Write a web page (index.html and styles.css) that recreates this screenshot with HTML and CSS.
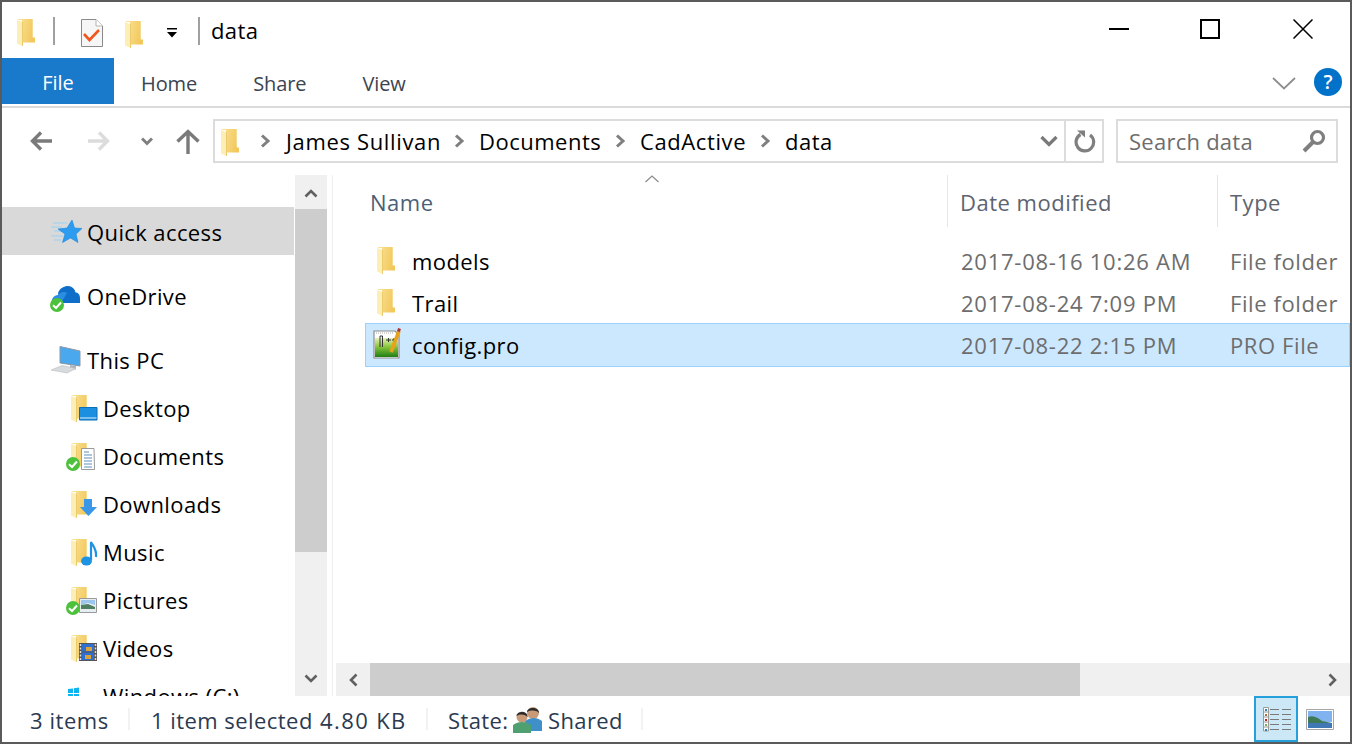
FILE: index.html
```html
<!DOCTYPE html>
<html lang="en">
<head>
<meta charset="utf-8">
<title>data</title>
<link rel="stylesheet" href="styles.css">
</head>
<body>
<svg class="defs" width="0" height="0" aria-hidden="true">
  <defs>
    <linearGradient id="fg" x1="0" y1="0" x2="1" y2="0.25"><stop offset="0" stop-color="#fbe49a"/><stop offset="1" stop-color="#f2c85c"/></linearGradient>
    <linearGradient id="pg" x1="0" y1="0" x2="0" y2="1"><stop offset="0" stop-color="#e4f2b8"/><stop offset=".45" stop-color="#8cc63e"/><stop offset="1" stop-color="#1f7f14"/></linearGradient>
    <symbol id="folder" viewBox="0 0 18 27">
      <path d="M0 1L2 0H15.7V18.5H18V23.5H5V1Z" fill="url(#fg)"/>
      <path d="M0 1L5.5 3V27L0 24.5Z" fill="#fdeeb5"/>
      <path d="M5.5 3V27" stroke="#eccb6e" stroke-width="1"/>
    </symbol>
    <symbol id="check" viewBox="0 0 14 14">
      <circle cx="7" cy="7" r="7" fill="#4cc13c"/>
      <path d="M3 7.200L6 10L11 4.500" fill="none" stroke="#fff" stroke-width="2"/>
    </symbol>
    <symbol id="crumb" viewBox="0 0 11 14">
      <path d="M2 1.500L8 7L2 12.500" fill="none" stroke="#7f7f7f" stroke-width="3"/>
    </symbol>
  </defs>
</svg>
<div class="window">
  <header class="titlebar">
    <svg class="folder-q" width="18" height="27"><use href="#folder"/></svg>
    <span class="qsep qsep-a"></span>
    <svg class="doc-q" width="22" height="28" viewBox="0 0 22 28">
      <path d="M.5.5H15L21.500 7V27.500H.5Z" fill="#f6f6f6" stroke="#8a8a8a"/>
      <path d="M15 .5V7H21.500" fill="#fff" stroke="#b5b5b5"/>
      <path d="M3 15L8.500 21L18 11" fill="none" stroke="#f0571f" stroke-width="2.600"/>
    </svg>
    <svg class="folder-q2" width="18" height="27"><use href="#folder"/></svg>
    <svg class="drop-q" width="10" height="10" viewBox="0 0 10 10">
      <path d="M0 0H10V1.500H0ZM0 4H10L5 9.500Z" fill="#000"/>
    </svg>
    <span class="qsep qsep-b"></span>
    <span class="title">data</span>
    <div class="controls">
      <svg width="20" height="20" viewBox="0 0 20 20"><path d="M0 10H20" stroke="#000" stroke-width="2"/></svg>
      <svg width="20" height="20" viewBox="0 0 20 20"><path d="M1 1H19V19H1Z" fill="none" stroke="#000" stroke-width="2"/></svg>
      <svg class="ctl-close" width="20" height="20" viewBox="0 0 20 20"><path d="M.5.5L19.500 19.500M19.500.5L.5 19.500" stroke="#000" stroke-width="1.500"/></svg>
    </div>
  </header>

  <nav class="tabs">
    <span class="tab-file">File</span>
    <span class="tab tab-home">Home</span>
    <span class="tab tab-share">Share</span>
    <span class="tab tab-view">View</span>
    <svg class="ribbon-toggle" width="24" height="13" viewBox="0 0 24 13"><path d="M1 1L12 11.500L23 1" fill="none" stroke="#8e8e8e" stroke-width="1.800"/></svg>
    <span class="help">?</span>
  </nav>

  <div class="toolbar">
    <svg class="nav-back" width="22" height="20" viewBox="0 0 22 20"><path d="M22 10H4M11 1.500L2.500 10L11 18.500" fill="none" stroke="#7a7a7a" stroke-width="3.400"/></svg>
    <svg class="nav-fwd" width="22" height="20" viewBox="0 0 22 20"><path d="M0 10H18M11 1.500L19.500 10L11 18.500" fill="none" stroke="#dcdcdc" stroke-width="3.400"/></svg>
    <svg class="nav-down" width="12" height="9" viewBox="0 0 12 9"><path d="M1 1.500L6 6.500L11 1.500" fill="none" stroke="#7f7f7f" stroke-width="3"/></svg>
    <svg class="nav-up" width="24" height="25" viewBox="0 0 24 25"><path d="M12 25V4M1.500 12.500L12 2.500L22.500 12.500" fill="none" stroke="#7a7a7a" stroke-width="3.400"/></svg>
    <div class="address">
      <svg class="addr-folder" width="18" height="27"><use href="#folder"/></svg>
      <svg class="crumb-icon first" width="11" height="14"><use href="#crumb"/></svg>
      <span class="crumb c1">James Sullivan</span>
      <svg class="crumb-icon" width="11" height="14"><use href="#crumb"/></svg>
      <span class="crumb c2">Documents</span>
      <svg class="crumb-icon" width="11" height="14"><use href="#crumb"/></svg>
      <span class="crumb c3">CadActive</span>
      <svg class="crumb-icon" width="11" height="14"><use href="#crumb"/></svg>
      <span class="crumb">data</span>
      <svg class="addr-drop" width="18" height="12" viewBox="0 0 18 12"><path d="M1.500 2L9 9.500L16.500 2" fill="none" stroke="#7a7a7a" stroke-width="3.200"/></svg>
      <span class="refresh">
        <svg width="22" height="24" viewBox="0 0 22 24"><path d="M6.500 5.500A8.800 8.800 0 1 0 16 6" fill="none" stroke="#7f7f7f" stroke-width="3.200"/><path d="M3 1.500H11V8.500Z" fill="#7f7f7f"/></svg>
      </span>
    </div>
    <div class="search">
      <span class="search-text">Search data</span>
      <svg width="24" height="24" viewBox="0 0 24 24"><circle cx="15.500" cy="8.500" r="6" fill="none" stroke="#7f7f7f" stroke-width="3.200"/><path d="M11 13L2 22" stroke="#7f7f7f" stroke-width="4"/></svg>
    </div>
  </div>

  <main class="main">
    <aside class="nav">
      <div class="row top active">
        <svg class="ico" width="32" height="32" viewBox="0 0 32 32">
          <path d="M3 8H17M1 12H12M4 16H11M1 21H13M4 25H11" stroke="#9ad2f7" stroke-width="1.200"/>
          <path d="M22 5L24.500 13L32 13.500L26 19L28 27.500L20.500 23L12.500 27.500L15 19L8 14L17 13Z" fill="#2d9cf0" stroke="#1b84d8" stroke-width=".6"/>
        </svg>
        <span>Quick access</span>
      </div>
      <div class="row top gap-a">
        <svg class="ico" width="32" height="32" viewBox="0 0 32 32">
          <path d="M8 12C10 7 14 5 18 5C22 5 25 8 25.500 11.500C28.500 11.500 30 14 30 17V22H10Z" fill="#0f6fc8"/>
          <path d="M2 22C1 18 4 14 8 14C10 11 14 10 17 12L11 22Z" fill="#2a8de2"/>
          <use href="#check" x="0" y="17" width="14" height="14"/>
        </svg>
        <span>OneDrive</span>
      </div>
      <div class="row top gap-b">
        <svg class="ico" width="32" height="32" viewBox="0 0 32 32">
          <path d="M10 1.500L30 6V21L10 18Z" fill="#4aa8ef" stroke="#8b97a3"/>
          <path d="M20 20V24L26 24.500V21Z" fill="#aeb4ba"/>
          <path d="M1 25L12 20.500L26 23.500L17 28Z" fill="#d8dbde" stroke="#b9bcc0" stroke-width=".6"/>
        </svg>
        <span>This PC</span>
      </div>
      <div class="row child">
        <svg class="ico" width="34" height="32" viewBox="0 0 34 32">
          <use href="#folder" x="7" y="2" width="18" height="27"/>
          <path d="M15.500 14.500H33V27H15.500Z" fill="#1d8fe1" stroke="#0a6fb8"/>
          <path d="M16 25H32.500" stroke="#dff1fd"/>
        </svg>
        <span>Desktop</span>
      </div>
      <div class="row child">
        <svg class="ico" width="34" height="32" viewBox="0 0 34 32">
          <use href="#folder" x="7" y="2" width="18" height="27"/>
          <path d="M17.500 7.500H30L30.500 28.500H17.500Z" fill="#fff" stroke="#9a9a9a"/>
          <path d="M20 11H25M20 14H28M20 17H28M20 20H28M20 23H28M20 26H28" stroke="#5c90bd" stroke-width="1.200"/>
          <use href="#check" x="2" y="16" width="14" height="14"/>
        </svg>
        <span>Documents</span>
      </div>
      <div class="row child">
        <svg class="ico" width="34" height="32" viewBox="0 0 34 32">
          <use href="#folder" x="7" y="2" width="18" height="27"/>
          <path d="M20 10H28V18H33L24.500 27L16 18H20Z" fill="#3a96e6"/>
        </svg>
        <span>Downloads</span>
      </div>
      <div class="row child">
        <svg class="ico" width="34" height="32" viewBox="0 0 34 32">
          <use href="#folder" x="7" y="2" width="18" height="27"/>
          <ellipse cx="22.500" cy="24" rx="5.500" ry="4.500" fill="#1e93e4"/>
          <path d="M27 23V5C29 9 33 12 32 20" fill="none" stroke="#1e93e4" stroke-width="2.200"/>
        </svg>
        <span>Music</span>
      </div>
      <div class="row child">
        <svg class="ico" width="34" height="32" viewBox="0 0 34 32">
          <use href="#folder" x="7" y="2" width="18" height="27"/>
          <path d="M15.500 13.500H32.500V27.500H15.500Z" fill="#e6eef4" stroke="#9a9a9a"/>
          <path d="M17 15H31V20L24 18L17 20Z" fill="#9cc6ee"/>
          <path d="M17 20L24 19L31 22V24H17Z" fill="#4f7f60"/>
          <use href="#check" x="2" y="16" width="14" height="14"/>
        </svg>
        <span>Pictures</span>
      </div>
      <div class="row child">
        <svg class="ico" width="34" height="32" viewBox="0 0 34 32">
          <use href="#folder" x="7" y="2" width="18" height="27"/>
          <path d="M15 10H33V28H15Z" fill="#555"/>
          <path d="M18 11H30V18.500H18Z" fill="#2f6fd0"/>
          <path d="M18 19.500H30V27H18Z" fill="#2f6fd0"/>
          <path d="M22 14H28V18H22ZM21 22H27V26H21Z" fill="#d9a23a"/>
          <path d="M16.500 11V27M31.500 11V27" stroke="#ddd" stroke-width="1.500" stroke-dasharray="2 1.500"/>
        </svg>
        <span>Videos</span>
      </div>
      <div class="row top drive">
        <svg class="ico" width="32" height="32" viewBox="0 0 32 32">
          <path d="M18 8L23 7.500V12H18ZM24 7.300L29 6.500V12H24ZM18 13H23V17.500H18ZM24 13H29V18.500H24Z" fill="#0cb4f0"/>
        </svg>
        <span>Windows (C:)</span>
      </div>
    </aside>
    <div class="vscroll">
      <svg width="14" height="9" viewBox="0 0 14 9"><path d="M1.500 7.500L7 2L12.500 7.500" fill="none" stroke="#606060" stroke-width="2.600"/></svg>
      <span class="vthumb"></span>
      <svg class="vdown" width="14" height="9" viewBox="0 0 14 9"><path d="M1.500 1.500L7 7L12.500 1.500" fill="none" stroke="#606060" stroke-width="2.600"/></svg>
    </div>
    <section class="content">
      <div class="head">
        <span class="col-name">Name</span>
        <span class="col-date">Date modified</span>
        <span class="col-type">Type</span>
        <svg class="sort" width="14" height="8" viewBox="0 0 14 8"><path d="M.5 7L7 1L13.500 7" fill="none" stroke="#8a8a8a" stroke-width="1.200"/></svg>
      </div>
      <div class="files">
        <div class="file">
          <span class="fname"><svg width="18" height="27"><use href="#folder"/></svg><b>models</b></span>
          <span class="fdate">2017-08-16 10:26 AM</span>
          <span class="ftype">File folder</span>
        </div>
        <div class="file">
          <span class="fname"><svg width="18" height="27"><use href="#folder"/></svg><b>Trail</b></span>
          <span class="fdate">2017-08-24 7:09 PM</span>
          <span class="ftype">File folder</span>
        </div>
        <div class="file selected">
          <span class="fname">
            <svg class="pro" width="30" height="32" viewBox="0 0 30 32">
              <path d="M1 4H22L26 8V31H1Z" fill="#fff" stroke="#8c8c8c" stroke-width="1.200"/>
              <path d="M2 11H25V30H2Z" fill="url(#pg)"/>
              <path d="M3 6H20" stroke="#aaa" stroke-dasharray="1 1"/>
              <path d="M7 9V20M9.500 9V20M7 9H9.500M13 13H18M15.500 11V15M19 13H23M21 11V15" stroke="#333" stroke-width="1"/>
              <path d="M26 4L18 25" stroke="#e8a31c" stroke-width="3.600"/>
              <path d="M26.500 1.500L25.500 4.500" stroke="#a33" stroke-width="3"/>
            </svg><b>config.pro</b>
          </span>
          <span class="fdate">2017-08-22 2:15 PM</span>
          <span class="ftype">PRO File</span>
        </div>
      </div>
      <div class="hscroll">
        <svg class="hleft" width="9" height="14" viewBox="0 0 9 14"><path d="M7.500 1.500L2 7L7.500 12.500" fill="none" stroke="#606060" stroke-width="2.600"/></svg>
        <span class="hthumb"></span>
        <svg class="hright" width="9" height="14" viewBox="0 0 9 14"><path d="M1.500 1.500L7 7L1.500 12.500" fill="none" stroke="#606060" stroke-width="2.600"/></svg>
      </div>
    </section>
  </main>

  <footer class="status">
    <span class="st st-items">3 items</span>
    <span class="st-sep"></span>
    <span class="st st-sel">1 item selected</span>
    <span class="st st-size">4.80 KB</span>
    <span class="st-sep"></span>
    <span class="st st-state">State:</span>
    <svg class="people" width="30" height="27" viewBox="0 0 30 27">
      <circle cx="20" cy="7" r="6" fill="#c89a78"/><path d="M14 6C14 1 26 0 26 7C23 4 18 4 14 6Z" fill="#2c2c2c"/>
      <path d="M12 15C18 11 24 11 29 15V25H12Z" fill="#3f8fc8"/>
      <circle cx="9" cy="11" r="5.500" fill="#c89a78"/><path d="M3.500 10C3.500 5 15 4 14.500 11C11 8 7 8 3.500 10Z" fill="#2c2c2c"/>
      <path d="M0 19C5 15 13 15 18 19V27H0Z" fill="#4ea070"/>
    </svg>
    <span class="st">Shared</span>
    <span class="st-sep last"></span>
    <div class="views">
      <span class="view-on">
        <svg width="30" height="26" viewBox="0 0 30 26">
          <path d="M1.500 1.500H6.500V25H1.500ZM1.500 6H6.500M1.500 11H6.500M1.500 16H6.500M1.500 21H6.500" fill="#fff" stroke="#9a9a9a"/>
          <path d="M3 3H5V5H3Z" fill="#2f7fb8"/><path d="M3 8H5V10H3Z" fill="#a8703a"/><path d="M3 13H5V15H3Z" fill="#c02020"/><path d="M3 18H5V20H3Z" fill="#7fa860"/><path d="M3 23H5V25H3Z" fill="#2f7fb8"/>
          <path d="M8 3.500H17M20 3.500H29M8 8.500H17M20 8.500H29M8 13.500H17M20 13.500H29M8 18.500H17M20 18.500H29M8 23.500H17M20 23.500H29" stroke="#7a7a7a"/>
        </svg>
      </span>
      <svg class="view-img" width="28" height="21" viewBox="0 0 28 21">
        <path d="M.5.5H27.500V20.500H.5Z" fill="#fff" stroke="#a6a6a6"/>
        <path d="M2 2H26V13H2Z" fill="#7fb2ee"/>
        <path d="M2 8C8 6 12 9 16 12L26 14V15H2Z" fill="#3f7a58"/>
        <path d="M2 14H26V19H2Z" fill="#3f78b4"/>
      </svg>
    </div>
  </footer>
</div>
</body>
</html>
```

FILE: styles.css
```css
* { box-sizing: border-box; }
html, body { margin: 0; height: 100%; overflow: hidden; background: #fff; }
body { font-family: "Open Sans", "Noto Sans", "Liberation Sans", sans-serif; font-size: 22px; letter-spacing: .4px; color: #000; }
svg { display: block; flex: none; }
.defs { position: absolute; }
.window { width: 1352px; height: 744px; border: 2px solid #5a5a5a; display: flex; flex-direction: column; overflow: hidden; background: #fff; }

.titlebar { height: 56px; display: flex; align-items: center; padding-left: 15px; flex: none; }
.folder-q { margin-top: 4px; }
.qsep { width: 2px; height: 28px; background: #a0a0a0; margin-top: 2px; }
.qsep-a { margin-left: 18px; }
.doc-q { margin-left: 26px; margin-top: 5px; }
.folder-q2 { margin-left: 22px; margin-top: 8px; }
.drop-q { margin-left: 24px; margin-top: 5px; }
.qsep-b { margin-left: 21px; }
.title { margin-left: 11px; }
.controls { margin-left: auto; margin-right: 37px; display: flex; gap: 71px; margin-top: -2px; }
.ctl-close { margin-left: 2px; }

.tabs { height: 50px; border-bottom: 2px solid #dadada; display: flex; align-items: flex-start; flex: none; color: #3c4450; font-size: 20px; letter-spacing: -.1px; }
.tab-file { width: 112px; height: 46px; background: #1979ca; color: #fff; display: flex; align-items: center; justify-content: center; padding-top: 3px; }
.tab { line-height: 52px; }
.tab-home { margin-left: 27px; }
.tab-share { margin-left: 56px; }
.tab-view { margin-left: 56px; }
.ribbon-toggle { margin-left: auto; margin-top: 19px; }
.help { width: 28px; height: 28px; border-radius: 50%; background: #0072c9; color: #fff; font-size: 20px; font-weight: 600; text-align: center; line-height: 28px; margin: 10px 8px 0 18px; letter-spacing: 0; }

.toolbar { height: 67px; display: flex; align-items: center; padding-bottom: 1px; flex: none; }
.nav-back { margin-left: 28px; }
.nav-fwd { margin-left: 36px; }
.nav-down { margin-left: 31px; }
.nav-up { margin-left: 23px; }
.address { margin-left: 13px; width: 891px; height: 44px; border: 2px solid #dcdcdc; display: flex; align-items: center; padding-left: 6px; }
.addr-folder { margin-top: 2px; }
.crumb { letter-spacing: .5px; }
.crumb-icon { margin: 0 14px 0 14px; }
.crumb-icon.first { margin-left: 21px; }
.c1 { width: 155px; white-space: nowrap; letter-spacing: .65px; padding-left: 1px; }
.c2 { width: 122px; white-space: nowrap; }
.c3 { width: 106px; white-space: nowrap; letter-spacing: .6px; }
.addr-drop { margin-left: auto; margin-right: 6px; }
.refresh { width: 38px; height: 40px; border-left: 2px solid #dcdcdc; display: flex; align-items: center; justify-content: center; padding-left: 2px; }
.search { margin-left: 12px; width: 222px; height: 44px; border: 2px solid #dcdcdc; display: flex; align-items: center; justify-content: space-between; padding: 0 10px 0 11px; color: #6d6d6d; letter-spacing: .25px; }

.main { flex: 1; display: flex; min-height: 0; }
.nav { width: 293px; flex: none; overflow: hidden; padding-top: 32px; }
.row { height: 48px; display: flex; align-items: center; white-space: nowrap; }
.row span { padding-bottom: 2px; }
.top { padding-left: 48px; }
.child { padding-left: 62px; }
.row .ico { margin-right: 5px; }
.active { background: #d9d9d9; margin-right: 1px; }
.active span { padding: 2px 0 0; }
.gap-a { margin-top: 18px; }
.gap-b { margin-top: 16px; }
.drive span { margin-left: 16px; }
.vscroll { width: 32px; flex: none; background: #f0f0f0; display: flex; flex-direction: column; align-items: center; position: relative; padding-top: 14px; }
.vthumb { position: absolute; left: 0; right: 0; top: 34px; height: 343px; background: #cdcdcd; }
.vdown { margin-top: auto; margin-bottom: 13px; }

.content { flex: 1; min-width: 0; margin-left: 5px; border-left: 1px solid #f0f0f0; display: flex; flex-direction: column; padding-left: 3px; }
.head { height: 52px; display: flex; align-items: center; color: #4c5f78; position: relative; flex: none; letter-spacing: .5px; }
.col-name { width: 611px; padding-left: 34px; height: 100%; line-height: 54px; }
.col-date { width: 270px; padding-left: 12px; height: 100%; border-left: 1px solid #e5e5e5; line-height: 54px; color: #5d6470; }
.col-type { flex: 1; padding-left: 12px; height: 100%; border-left: 1px solid #e5e5e5; line-height: 54px; color: #5d6470; }
.sort { position: absolute; left: 309px; top: 0; }
.files { flex: 1; padding: 12px 0 0 29px; }
.file { height: 43px; margin-bottom: -1px; display: flex; align-items: center; border: 1px solid transparent; }
.selected { height: 44px; background: #cce8ff; border-color: #99d1ff; }
.fname { width: 582px; display: flex; align-items: center; padding-left: 11px; height: 100%; }
.fname b { font-weight: 400; margin-left: 17px; }
.pro { margin-left: -4px; margin-right: -8px; margin-top: -4px; }
.fdate { width: 270px; padding-left: 13px; color: #6d6d6d; white-space: nowrap; letter-spacing: .75px; }
.ftype { color: #6d6d6d; padding-left: 12px; white-space: nowrap; letter-spacing: .6px; }
.hscroll { height: 33px; background: #f0f0f0; display: flex; align-items: center; flex: none; position: relative; }
.hleft { margin-left: 13px; }
.hthumb { position: absolute; left: 34px; top: 0; bottom: 0; width: 710px; background: #cdcdcd; }
.hright { margin-left: auto; margin-right: 13px; }

.status { height: 46px; flex: none; display: flex; align-items: center; color: #2b3a50; padding-left: 28px; }
.st { white-space: nowrap; padding-top: 2px; }
.st-items { width: 98px; letter-spacing: .55px; }
.st-sep { width: 2px; height: 22px; background: #f2f2f2; }
.st-sel { margin-left: 21px; width: 169px; letter-spacing: .45px; }
.st-size { width: 106px; letter-spacing: 1.4px; }
.st-state { margin-left: 20px; width: 65px; }
.people { margin-right: 5px; }
.st-sep.last { margin-left: 18px; }
.views { margin-left: auto; height: 100%; display: flex; align-items: center; }
.view-on { width: 44px; height: 46px; background: #cce8f6; border: 2px solid #26a0da; display: flex; align-items: center; justify-content: center; padding-left: 2px; }
.view-img { margin: 0 16px 0 8px; }
```
